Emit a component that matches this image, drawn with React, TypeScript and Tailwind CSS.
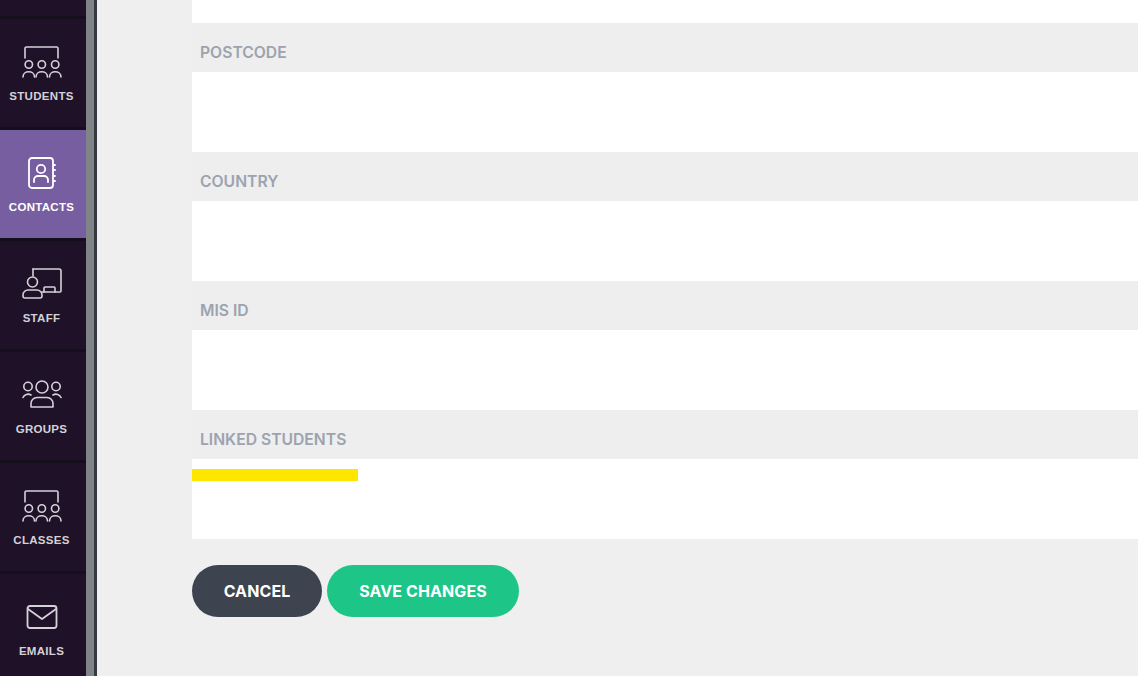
import React from "react";

const navFont = "font-['Liberation_Sans',sans-serif]";

const ClassIcon = () => (
  <svg width="40" height="34" viewBox="0 0 40 34" fill="none" stroke="currentColor" strokeWidth="1.6" strokeLinecap="round" strokeLinejoin="round">
    <path d="M3 13V3.5A1.5 1.5 0 0 1 4.5 2h30A1.5 1.5 0 0 1 36 3.5V13" />
    <circle cx="6.8" cy="19.5" r="3.7" />
    <circle cx="19.8" cy="19.5" r="3.7" />
    <circle cx="33.2" cy="19.5" r="3.7" />
    <path d="M1 32c0-7 11.5-7 11.5 0" />
    <path d="M14 32c0-7 11.5-7 11.5 0" />
    <path d="M27.5 32c0-7 11.5-7 11.5 0" />
  </svg>
);

const ContactIcon = () => (
  <svg width="30" height="34" viewBox="0 0 30 34" fill="none" stroke="currentColor" strokeWidth="1.8" strokeLinecap="round" strokeLinejoin="round">
    <rect x="2" y="2" width="24" height="30" rx="3" />
    <circle cx="14" cy="13" r="4.2" />
    <path d="M7 26v-2a4 4 0 0 1 4-4h6a4 4 0 0 1 4 4v2" />
    <path d="M27 9h1M27 14h1M27 20h1M27 25h1" />
  </svg>
);

const StaffIcon = () => (
  <svg width="40" height="32" viewBox="0 0 40 32" fill="none" stroke="currentColor" strokeWidth="1.6" strokeLinecap="round" strokeLinejoin="round">
    <path d="M11 2h26a2 2 0 0 1 2 2v20a1 1 0 0 1-1 1H20" />
    <path d="M11 2v7" />
    <circle cx="10.5" cy="15" r="5" />
    <path d="M22 25v-4a1 1 0 0 1 1-1h9a1 1 0 0 1 1 1v4" />
    <path d="M3 31a2 2 0 0 1-2-2v-1a5 5 0 0 1 5-5h9a5 5 0 0 1 5 5v1a2 2 0 0 1-2 2z" />
  </svg>
);

const GroupIcon = () => (
  <svg width="40" height="28" viewBox="0 0 40 28" fill="none" stroke="currentColor" strokeWidth="1.6" strokeLinecap="round" strokeLinejoin="round">
    <circle cx="20" cy="7" r="6" />
    <circle cx="6" cy="6.5" r="4.2" />
    <circle cx="34" cy="6.5" r="4.2" />
    <path d="M9 27v-3.5a6 6 0 0 1 6-6h10a6 6 0 0 1 6 6V27z" />
    <path d="M1 17.5a5.5 5.5 0 0 1 8-2.5" />
    <path d="M39 17.5a5.5 5.5 0 0 0-8-2.5" />
  </svg>
);

const MailIcon = () => (
  <svg width="32" height="24" viewBox="0 0 32 24" fill="none" stroke="currentColor" strokeWidth="1.8" strokeLinecap="round" strokeLinejoin="round">
    <rect x="1.5" y="1" width="29" height="22" rx="2.5" />
    <path d="M2 4 16 14 30 4" />
  </svg>
);

type NavItem = { label: string; icon: React.ReactNode; iconPad: string; active?: boolean };

const navItems: NavItem[] = [
  { label: "STUDENTS", icon: <ClassIcon />, iconPad: "pb-[10px]" },
  { label: "CONTACTS", icon: <ContactIcon />, iconPad: "pb-[10px]", active: true },
  { label: "STAFF", icon: <StaffIcon />, iconPad: "pb-[12px]" },
  { label: "GROUPS", icon: <GroupIcon />, iconPad: "pb-[14px]" },
  { label: "CLASSES", icon: <ClassIcon />, iconPad: "pb-[10px]" },
  { label: "EMAILS", icon: <MailIcon />, iconPad: "pb-[15px]" },
];

const fields = ["POSTCODE", "COUNTRY", "MIS ID", "LINKED STUDENTS"];

const App: React.FC = () => {
  return (
    <div className="flex h-[676px] w-[1138px] overflow-hidden bg-[#efefef]">
      <div className="flex h-full w-[86px] shrink-0 flex-col gap-[3px] bg-[#150e1c]">
        <div className="h-[16px] shrink-0 bg-[#1e1128]" />
        {navItems.map((item) => (
          <div
            key={item.label}
            className={`flex h-[108px] shrink-0 flex-col items-center pr-[3px] ${
              item.active ? "bg-[#775ea0] text-white" : "bg-[#1e1128] text-[#d4d1d8]"
            }`}
          >
            <div className={`flex h-[70px] w-full items-end justify-center ${item.iconPad}`}>{item.icon}</div>
            <span className={`${navFont} text-[11.5px] leading-[14px] font-bold tracking-[0.3px]`}>
              {item.label}
            </span>
          </div>
        ))}
      </div>
      <div className="h-full w-[8px] shrink-0 bg-[#808488]" />
      <div className="h-full w-[3px] shrink-0 bg-[#343a40]" />
      <div className="flex min-w-0 flex-1 flex-col pl-[95px]">
        <div className="h-[23px] bg-white" />
        {fields.map((name) => (
          <div key={name}>
            <div className="flex h-[49px] items-center bg-[#eeeeee] pl-[8px] pt-[11px] font-['Inter',sans-serif] text-[15.7px] font-semibold text-[#9ca3af]">
              {name}
            </div>
            <div className="h-[80px] bg-white">
              {name === "LINKED STUDENTS" && <div className="relative top-[10px] h-[12px] w-[166px] bg-[#ffe600]" />}
            </div>
          </div>
        ))}
        <div className="mt-[26px] flex gap-[5px] font-['Inter',sans-serif] text-[16px] font-bold tracking-[0.1px] text-white">
          <button className="h-[52px] w-[130px] rounded-[26px] bg-[#3e444f] pb-[1px]">CANCEL</button>
          <button className="h-[52px] w-[192px] rounded-[26px] bg-[#1dc687] pb-[1px]">SAVE CHANGES</button>
        </div>
      </div>
    </div>
  );
};

export default App;
